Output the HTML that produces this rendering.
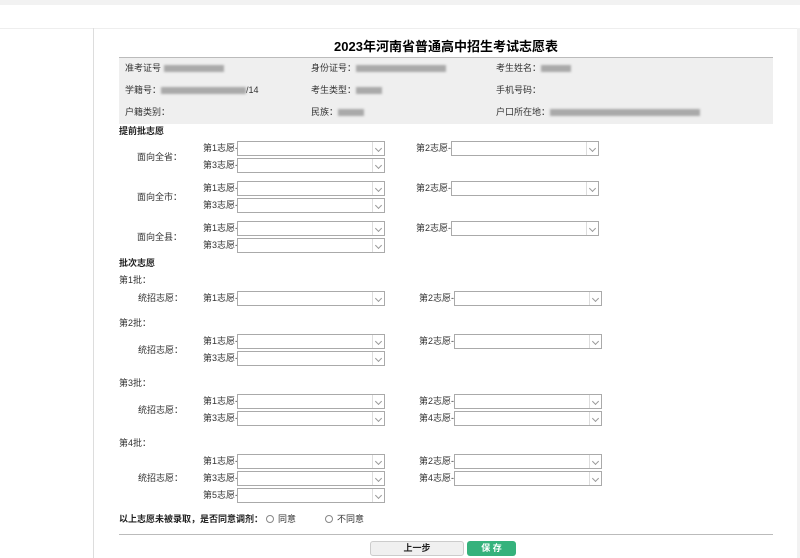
<!DOCTYPE html><html><head><meta charset="utf-8"><style>
body{margin:0;width:800px;height:558px;position:relative;overflow:hidden;background:#fff;font-family:"Liberation Sans","Noto Sans CJK SC",sans-serif;font-size:9px;color:#333}
div,span{position:absolute;box-sizing:border-box}
.t{white-space:nowrap;line-height:10px}
.s{width:148px;height:15px;border:1px solid #aaa;background:#fff}
.s:after{content:"";position:absolute;right:0;top:0;width:11px;height:13px;border-left:1px solid #ddd}
.s i{position:absolute;right:3px;top:4px;width:4px;height:4px;border-right:1px solid #999;border-bottom:1px solid #999;transform:rotate(45deg)}
.b{font-weight:bold;color:#222}
.blur{display:inline-block;height:7px;background:#aaa;vertical-align:middle;filter:blur(1px)}
</style></head><body>
<div style="left:0;top:0;width:800px;height:5px;background:#f2f2f2"></div>
<div style="left:0;top:28px;width:800px;height:1px;background:#eee"></div>
<div style="left:93px;top:28px;width:1px;height:530px;background:#ddd"></div>
<div style="left:797px;top:28px;width:3px;height:530px;background:#f2f2f2"></div>
<div class="t b" style="left:119px;width:654px;top:40px;text-align:center;font-size:13px;line-height:14px;color:#000">2023年河南省普通高中招生考试志愿表</div>
<div style="left:119px;top:57px;width:654px;height:67px;background:#efefef;border-top:1px solid #bbb"></div>
<div class="t" style="left:125px;top:63px">准考证号 <span class="blur" style="position:static;width:60px"></span></div>
<div class="t" style="left:311px;top:63px">身份证号：<span class="blur" style="position:static;width:90px"></span></div>
<div class="t" style="left:496px;top:63px">考生姓名：<span class="blur" style="position:static;width:30px"></span></div>
<div class="t" style="left:125px;top:85px">学籍号：<span class="blur" style="position:static;width:85px"></span>/14</div>
<div class="t" style="left:311px;top:85px">考生类型：<span class="blur" style="position:static;width:26px"></span></div>
<div class="t" style="left:496px;top:85px">手机号码：</div>
<div class="t" style="left:125px;top:107px">户籍类别：</div>
<div class="t" style="left:311px;top:107px">民族：<span class="blur" style="position:static;width:26px"></span></div>
<div class="t" style="left:496px;top:107px">户口所在地：<span class="blur" style="position:static;width:150px"></span></div>
<div class="t b" style="left:119px;top:126px">提前批志愿</div>
<div class="t b" style="left:119px;top:258px">批次志愿</div>
<div class="t" style="left:137px;top:152px">面向全省：</div>
<div class="t" style="left:137px;top:192px">面向全市：</div>
<div class="t" style="left:137px;top:232px">面向全县：</div>
<div class="t" style="left:119px;top:275px">第1批：</div>
<div class="t" style="left:119px;top:318px">第2批：</div>
<div class="t" style="left:119px;top:378px">第3批：</div>
<div class="t" style="left:119px;top:438px">第4批：</div>
<div class="t" style="left:138px;top:293px">统招志愿：</div>
<div class="t" style="left:138px;top:345px">统招志愿：</div>
<div class="t" style="left:138px;top:405px">统招志愿：</div>
<div class="t" style="left:138px;top:473px">统招志愿：</div>
<div id="rows"></div>
<div class="t b" style="left:119px;top:514px">以上志愿未被录取，是否同意调剂：</div>
<div style="left:266px;top:515px;width:8px;height:8px;border:1px solid #888;border-radius:50%"></div><div class="t" style="left:278px;top:514px">同意</div>
<div style="left:325px;top:515px;width:8px;height:8px;border:1px solid #888;border-radius:50%"></div><div class="t" style="left:337px;top:514px">不同意</div>
<div style="left:119px;top:534px;width:654px;height:1px;background:#bbb"></div>
<div class="t b" style="left:370px;top:541px;width:94px;height:15px;background:#f0f0f0;border:1px solid #ccc;border-radius:3px;text-align:center;line-height:13px">上一步</div>
<div class="t b" style="left:467px;top:541px;width:49px;height:15px;background:#35b27c;border-radius:3px;text-align:center;line-height:15px;color:#fff">保 存</div>
<script>
var R=[[148,1,237,203],[165,3,237,203],[148,2,451,416],[188,1,237,203],[205,3,237,203],[188,2,451,416],[228,1,237,203],[245,3,237,203],[228,2,451,416],
[298,1,237,203],[298,2,454,419],[341,1,237,203],[358,3,237,203],[341,2,454,419],
[401,1,237,203],[418,3,237,203],[401,2,454,419],[418,4,454,419],
[461,1,237,203],[478,3,237,203],[495,5,237,203],[461,2,454,419],[478,4,454,419]];
var h='';R.forEach(function(r){h+='<div class="t" style="left:'+r[3]+'px;top:'+(r[0]-5)+'px">第'+r[1]+'志愿-</div><div class="s" style="left:'+r[2]+'px;top:'+(r[0]-7)+'px"><i></i></div>';});
document.getElementById('rows').outerHTML=h;
</script>
</body></html>
